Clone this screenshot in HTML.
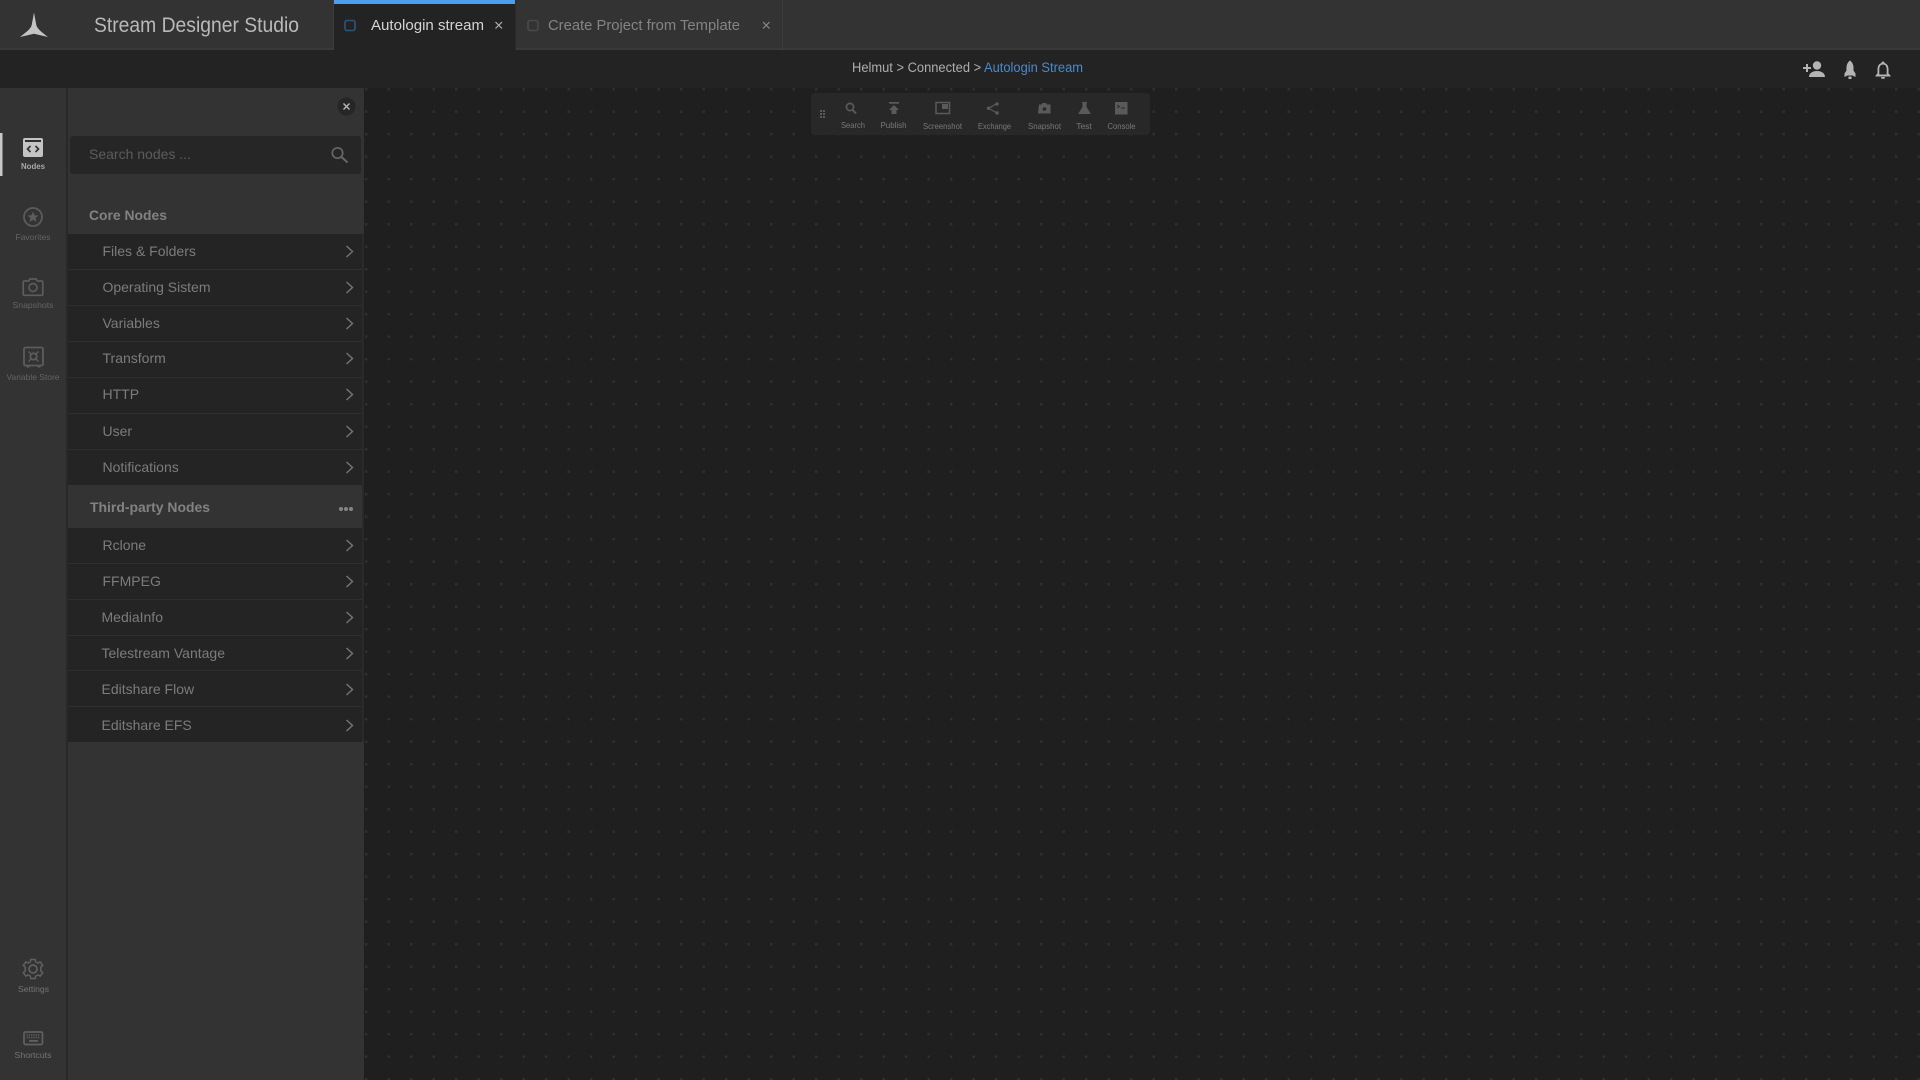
<!DOCTYPE html>
<html><head><meta charset="utf-8"><title>Stream Designer Studio</title>
<style>
html,body{margin:0;padding:0;background:#1f1f1f;width:1920px;height:1080px;overflow:hidden}
svg{display:block;position:absolute;left:0;top:0;filter:blur(0.35px)}
text{font-family:"Liberation Sans",sans-serif}
.it{font-size:14px;fill:#7c7c7c}
.ch{fill:none;stroke:#757575;stroke-width:1.4}
.ln{stroke:#2f2f2f;stroke-width:1}
.rl{font-size:8.5px;fill:#646464;text-anchor:middle}
.tb{font-size:8.5px;fill:#787878;text-anchor:middle}
.ti{fill:#5a5a5a}
</style></head><body>
<svg width="1920" height="1080" viewBox="0 0 1920 1080" xmlns="http://www.w3.org/2000/svg">
<defs><pattern id="d" x="365" y="88" width="22.5" height="22.5" patternUnits="userSpaceOnUse"><rect x="0" y="0" width="2.400" height="2.400" fill="#303030"/></pattern></defs>
<rect width="1920" height="1080" fill="#1f1f1f"/>
<rect x="364" y="88" width="1556" height="992" fill="url(#d)"/>
<!-- top -->
<rect width="1920" height="50" fill="#333"/>
<rect y="48" width="1920" height="2" fill="#393939"/>
<rect y="50" width="1920" height="38" fill="#232323"/>
<path d="M34 12.500L36.300 25C37 28 40 31 48 37L34 33.800L20 37C28 31 31 28 31.700 25Z" fill="#c4c4c4"/>
<text x="94" y="32" font-size="21" fill="#b9b9b9" textLength="205" lengthAdjust="spacingAndGlyphs">Stream Designer Studio</text>
<rect x="333" y="0" width="1" height="50" fill="#3d3d3d"/>
<rect x="334" y="0" width="181" height="50" fill="#232323"/>
<rect x="334" y="0" width="181" height="4" fill="#4a9ff0"/>
<rect x="345" y="20.500" width="10" height="10" rx="2" fill="none" stroke="#2c5480" stroke-width="1.600"/>
<text x="371" y="30" font-size="14.500" fill="#d4d4d4" textLength="113" lengthAdjust="spacingAndGlyphs">Autologin stream</text>
<path d="M495.500 22L502 28.500M502 22L495.500 28.500" stroke="#b4b4b4" stroke-width="1.200"/>
<rect x="515" y="0" width="1" height="50" fill="#2a2a2a"/>
<rect x="528" y="20.500" width="10" height="10" rx="2" fill="none" stroke="#4a4a4a" stroke-width="1.600"/>
<text x="548" y="30" font-size="14.500" fill="#848484" textLength="192" lengthAdjust="spacingAndGlyphs">Create Project from Template</text>
<path d="M763 22L769.500 28.500M769.500 22L763 28.500" stroke="#8a8a8a" stroke-width="1.200"/>
<rect x="782" y="0" width="1" height="50" fill="#3d3d3d"/>
<!-- breadcrumb -->
<text x="852" y="72" font-size="13.500" fill="#aeaeae" textLength="231" lengthAdjust="spacingAndGlyphs">Helmut &gt; Connected &gt; <tspan fill="#4a8acb">Autologin Stream</tspan></text>
<!-- right icons -->
<g fill="#b4b4b4">
<circle cx="1817" cy="65.500" r="4.200"/>
<path d="M1809 77C1809 72.500 1813.500 71 1817 71C1820.500 71 1825 72.500 1825 77Z"/>
<rect x="1803" y="67" width="8" height="2"/><rect x="1806" y="64" width="2" height="8"/>
<path d="M1850 60.500C1853.500 63 1853.800 67 1853.500 70.500L1855.500 73.500V77L1852.500 75.500H1847.500L1844.500 77V73.500L1846.500 70.500C1846.200 67 1846.500 63 1850 60.500Z"/>
<rect x="1848.500" y="76.500" width="3" height="2.500"/>
<path d="M1883 61.500C1884 61.500 1884.500 62 1884.500 63C1887.500 64 1888.500 66.500 1888.500 69.500V73.500L1890.500 75.500V76.500H1875.500V75.500L1877.500 73.500V69.500C1877.500 66.500 1878.500 64 1881.500 63C1881.500 62 1882 61.500 1883 61.500ZM1883 64.500C1880.500 64.500 1879.300 66.500 1879.300 69.500V74.500H1886.700V69.500C1886.700 66.500 1885.500 64.500 1883 64.500Z" fill-rule="evenodd"/>
<rect x="1881" y="77" width="4" height="1.800" rx="0.900"/>
</g>
<!-- left rail + panel -->
<rect x="0" y="88" width="66" height="992" fill="#333"/>
<rect x="66" y="88" width="2" height="992" fill="#282828"/>
<rect x="68" y="88" width="296" height="992" fill="#333"/>
<rect x="362" y="234" width="2" height="507" fill="#2a2a2a"/>
<rect x="0" y="133" width="2.500" height="43" fill="#c8c8c8"/>
<!-- Nodes -->
<rect x="23" y="138" width="20" height="19" rx="2" fill="#c4c4c4"/>
<rect x="25" y="140" width="16" height="2" fill="#2f2f2f"/>
<path d="M30.500 146L27.500 149L30.500 152M35.500 146L38.500 149L35.500 152" fill="none" stroke="#2f2f2f" stroke-width="1.600"/>
<text x="33" y="169" font-size="8.500" fill="#a8a8a8" text-anchor="middle" font-weight="bold" textLength="24" lengthAdjust="spacingAndGlyphs">Nodes</text>
<!-- Favorites -->
<circle cx="33" cy="217" r="9" fill="none" stroke="#5c5c5c" stroke-width="1.800"/>
<path d="M33 211.500L34.600 215.200L38.500 215.500L35.600 218L36.500 222L33 219.900L29.500 222L30.400 218L27.500 215.500L31.400 215.200Z" fill="#5c5c5c"/>
<text x="33" y="240" class="rl" textLength="35" lengthAdjust="spacingAndGlyphs">Favorites</text>
<!-- Snapshots -->
<path d="M24.500 281H28.500L30 279H36L37.500 281H41.500C42.300 281 42.800 281.500 42.800 282.300V294C42.800 294.800 42.300 295.300 41.500 295.300H24.500C23.700 295.300 23.200 294.800 23.200 294V282.300C23.200 281.500 23.700 281 24.500 281Z" fill="none" stroke="#5c5c5c" stroke-width="1.700"/>
<circle cx="33" cy="287.500" r="4" fill="none" stroke="#5c5c5c" stroke-width="1.700"/>
<text x="33" y="308" class="rl" textLength="41" lengthAdjust="spacingAndGlyphs">Snapshots</text>
<!-- Variable store -->
<rect x="24" y="347.500" width="19" height="18" rx="1.500" fill="none" stroke="#5c5c5c" stroke-width="1.800"/>
<rect x="26.500" y="366" width="3" height="1.500" fill="#5c5c5c"/><rect x="37.500" y="366" width="3" height="1.500" fill="#5c5c5c"/>
<circle cx="33.500" cy="356.500" r="3.200" fill="none" stroke="#5c5c5c" stroke-width="1.800"/>
<path d="M28.500 351.500L31 354M38.500 351.500L36 354M28.500 361.500L31 359M38.500 361.500L36 359" stroke="#5c5c5c" stroke-width="1.500"/>
<text x="33" y="380" class="rl" textLength="53" lengthAdjust="spacingAndGlyphs">Variable Store</text>
<!-- Settings -->
<g transform="translate(33 969)"><circle r="4" fill="none" stroke="#606060" stroke-width="1.700"/><path d="M-2.200 -9.500H2.200L2.800 -7L5 -6L7.200 -7.200L9.700 -3.600L7.800 -2V2L9.700 3.600L7.200 7.200L5 6L2.800 7L2.200 9.500H-2.200L-2.800 7L-5 6L-7.200 7.200L-9.700 3.600L-7.800 2V-2L-9.700 -3.600L-7.200 -7.200L-5 -6L-2.800 -7Z" fill="none" stroke="#606060" stroke-width="1.500"/></g>
<text x="33.500" y="992" class="rl" style="fill:#747474" textLength="31" lengthAdjust="spacingAndGlyphs">Settings</text>
<!-- Shortcuts -->
<rect x="24" y="1032" width="18.500" height="12.500" rx="1.500" fill="none" stroke="#606060" stroke-width="1.700"/>
<path d="M26.500 1035H40M26.500 1037.500H40" stroke="#606060" stroke-width="1.500" stroke-dasharray="1.300 1"/><rect x="29" y="1040" width="9" height="1.800" fill="#606060"/>
<text x="33" y="1058" class="rl" style="fill:#747474" textLength="37" lengthAdjust="spacingAndGlyphs">Shortcuts</text>
<!-- close -->
<circle cx="346.500" cy="106.500" r="9" fill="#262626"/>
<path d="M343.500 103.500L349.500 109.500M349.500 103.500L343.500 109.500" stroke="#bcbcbc" stroke-width="1.300"/>
<!-- search -->
<rect x="70" y="136" width="291" height="38" rx="3" fill="#262626"/>
<text x="89" y="159" font-size="14" fill="#5c5c5c">Search nodes ...</text>
<circle cx="337.500" cy="153" r="5.200" fill="none" stroke="#666" stroke-width="1.700"/>
<path d="M341.500 157L347.500 162.500" stroke="#666" stroke-width="2.100"/>
<!-- core -->
<text x="89" y="220" font-size="14" font-weight="bold" fill="#828282" textLength="78" lengthAdjust="spacingAndGlyphs">Core Nodes</text>
<rect x="68" y="234" width="294" height="251" fill="#242424"/>
<g class="ln"><path d="M68 269.500H362M68 305.500H362M68 341.500H362M68 377.500H362M68 413.500H362M68 449.500H362"/></g>
<g class="it">
<text x="102.500" y="256">Files &amp; Folders</text>
<text x="102.500" y="292" textLength="108" lengthAdjust="spacing">Operating Sistem</text>
<text x="102.500" y="328">Variables</text>
<text x="102.500" y="363">Transform</text>
<text x="102.500" y="399">HTTP</text>
<text x="102.500" y="436">User</text>
<text x="102.500" y="472">Notifications</text>
</g>
<text x="90" y="512" font-size="14" font-weight="bold" fill="#828282" textLength="120" lengthAdjust="spacingAndGlyphs">Third-party Nodes</text>
<g fill="#858585"><circle cx="341" cy="509" r="2"/><circle cx="346" cy="509" r="2"/><circle cx="351" cy="509" r="2"/></g>
<rect x="68" y="528" width="294" height="214" fill="#242424"/>
<g class="ln"><path d="M68 563.500H362M68 599.500H362M68 635.500H362M68 670.500H362M68 706.500H362"/></g>
<g class="it">
<text x="102.500" y="550">Rclone</text>
<text x="102.500" y="586">FFMPEG</text>
<text x="101.500" y="622">MediaInfo</text>
<text x="101.500" y="658">Telestream Vantage</text>
<text x="101.500" y="694">Editshare Flow</text>
<text x="101.500" y="730">Editshare EFS</text>
</g>
<g class="ch">
<path d="M346.500 246L352.500 251.500L346.500 257M346.500 282L352.500 287.500L346.500 293M346.500 318L352.500 323.500L346.500 329M346.500 353L352.500 358.500L346.500 364M346.500 389L352.500 394.500L346.500 400M346.500 426L352.500 431.500L346.500 437M346.500 462L352.500 467.500L346.500 473"/>
<path d="M346.500 540L352.500 545.500L346.500 551M346.500 576L352.500 581.500L346.500 587M346.500 612L352.500 617.500L346.500 623M346.500 648L352.500 653.500L346.500 659M346.500 684L352.500 689.500L346.500 695M346.500 720L352.500 725.500L346.500 731"/>
</g>
<!-- toolbar -->
<rect x="811" y="93" width="339" height="42" rx="4" fill="#282828"/>
<g fill="#5a5a5a"><rect x="820" y="110" width="2" height="2"/><rect x="823" y="110" width="2" height="2"/><rect x="820" y="113" width="2" height="2"/><rect x="823" y="113" width="2" height="2"/><rect x="820" y="116" width="2" height="2"/><rect x="823" y="116" width="2" height="2"/></g>
<circle cx="850" cy="107" r="3.600" fill="none" stroke="#5a5a5a" stroke-width="1.700"/><path d="M852.700 110L856 113.500" stroke="#5a5a5a" stroke-width="2"/>
<rect x="889" y="102" width="10" height="1.700" class="ti"/><path d="M894 105L899 110H896.500V114H891.500V110H889Z" class="ti"/>
<rect x="936" y="102.500" width="13.500" height="11" fill="none" stroke="#5a5a5a" stroke-width="1.500"/><rect x="942" y="104" width="6" height="5" class="ti"/>
<path d="M997 103.500L988.500 108.300L997 113" fill="none" stroke="#5a5a5a" stroke-width="1.200"/><circle cx="988.500" cy="108.300" r="1.700" class="ti"/><circle cx="997" cy="104" r="1.700" class="ti"/><circle cx="997" cy="113" r="1.700" class="ti"/>
<path d="M1039 104.500H1041.500L1042.500 103H1046L1047 104.500H1050.500V113.500H1038Z" class="ti"/><circle cx="1044.500" cy="109" r="1.800" fill="#282828"/>
<path d="M1082 102.500H1087M1083 103V107L1079 113.500H1090L1086 107V103" fill="#5a5a5a" stroke="#5a5a5a" stroke-width="1"/>
<rect x="1115" y="102" width="12.500" height="12.500" class="ti"/><path d="M1117 105L1119.500 106.500L1117 108M1121 108H1125" fill="none" stroke="#282828" stroke-width="0.900"/>
<g>
<text x="853" y="128" class="tb" textLength="24" lengthAdjust="spacingAndGlyphs">Search</text>
<text x="893.500" y="128" class="tb" textLength="26" lengthAdjust="spacingAndGlyphs">Publish</text>
<text x="942.500" y="129" class="tb" textLength="39" lengthAdjust="spacingAndGlyphs">Screenshot</text>
<text x="994.500" y="129" class="tb" textLength="33" lengthAdjust="spacingAndGlyphs">Exchange</text>
<text x="1044.500" y="129" class="tb" textLength="33" lengthAdjust="spacingAndGlyphs">Snapshot</text>
<text x="1084" y="129" class="tb">Test</text>
<text x="1121.500" y="129" class="tb" textLength="28" lengthAdjust="spacingAndGlyphs">Console</text>
</g>
</svg>
</body></html>
